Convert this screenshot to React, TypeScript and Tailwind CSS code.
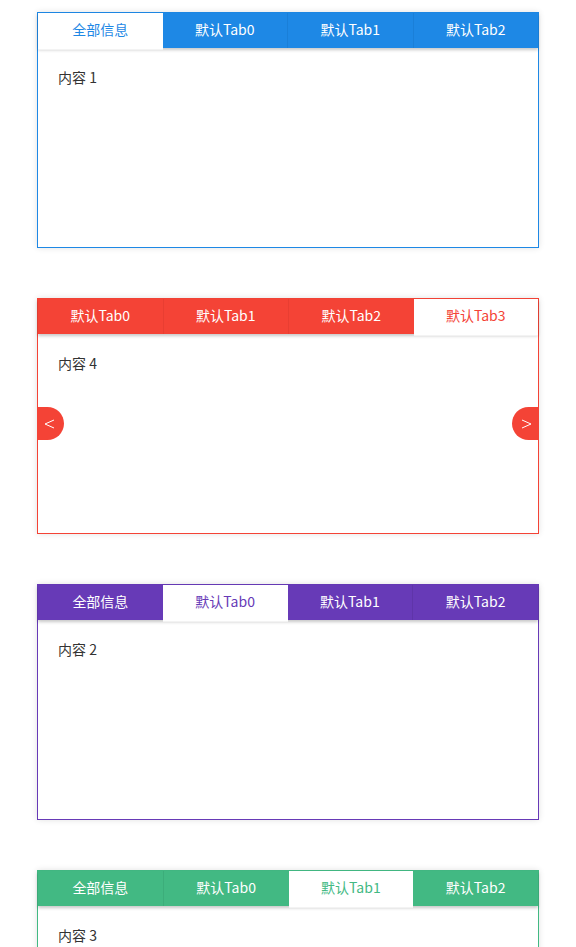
import React from 'react'

type Theme = {
  border: string
  bar: string
  text: string
  divider: string
}

const themes: Record<string, Theme> = {
  blue: {
    border: 'border-[#1e88e5]',
    bar: 'bg-[#1e88e5]',
    text: 'text-[#1e88e5]',
    divider: 'border-[#1a7fd8]',
  },
  red: {
    border: 'border-[#f44336]',
    bar: 'bg-[#f44336]',
    text: 'text-[#f44336]',
    divider: 'border-[#e83e32]',
  },
  purple: {
    border: 'border-[#673ab7]',
    bar: 'bg-[#673ab7]',
    text: 'text-[#673ab7]',
    divider: 'border-[#5f35a9]',
  },
  green: {
    border: 'border-[#42b983]',
    bar: 'bg-[#42b983]',
    text: 'text-[#42b983]',
    divider: 'border-[#3cad7a]',
  },
}

const font = 'font-["Microsoft_YaHei","Noto_Sans_CJK_SC",sans-serif]'

const Chevron = ({ dir }: { dir: 'left' | 'right' }) => (
  <svg width="11" height="10" viewBox="0 0 11 10" fill="none">
    <polyline
      points={dir === 'left' ? '10,1 1,5 10,9' : '1,1 10,5 1,9'}
      stroke="white"
      strokeWidth="1"
      strokeLinejoin="miter"
    />
  </svg>
)

function TabBox({
  theme,
  tabs,
  active,
  content,
  arrows,
}: {
  theme: Theme
  tabs: string[]
  active: number
  content: string
  arrows?: boolean
}) {
  return (
    <div
      className={`relative shrink-0 w-[502px] h-[236px] border bg-white ${theme.border} shadow-[0_0_6px_rgba(0,0,0,0.12)]`}
    >
      <div className={`relative flex h-[35px] ${theme.bar} shadow-[0_2px_3px_rgba(0,0,0,0.22)]`}>
        {tabs.map((t, i) => {
          const isActive = i === active
          const showDivider = i > 0 && !isActive && i - 1 !== active
          return (
            <div
              key={t}
              className={`flex-1 flex items-start justify-center pt-[6px] text-[14px] leading-[20px] ${
                isActive
                  ? `relative z-10 bg-white h-[37px] border-b border-[#f3f3f3] ${theme.text}`
                  : 'text-white'
              } ${showDivider ? `border-l ${theme.divider}` : ''}`}
            >
              {t}
            </div>
          )
        })}
      </div>
      <div className="px-5 pt-[19px] text-[14px] leading-[20px] text-[#333]">{content}</div>
      {arrows && (
        <>
          <div
            className={`absolute left-[-1px] top-[108px] w-[27px] h-[33px] rounded-r-full ${theme.bar} flex items-center justify-center pr-[2px]`}
          >
            <Chevron dir="left" />
          </div>
          <div
            className={`absolute right-[-1px] top-[108px] w-[27px] h-[33px] rounded-l-full ${theme.bar} flex items-center justify-center pl-[2px]`}
          >
            <Chevron dir="right" />
          </div>
        </>
      )}
    </div>
  )
}

export default function App() {
  return (
    <div className={`h-[947px] overflow-hidden bg-white pl-[37px] pt-[12px] flex flex-col gap-[50px] ${font}`}>
      <TabBox
        theme={themes.blue}
        tabs={['全部信息', '默认Tab0', '默认Tab1', '默认Tab2']}
        active={0}
        content="内容 1"
      />
      <TabBox
        theme={themes.red}
        tabs={['默认Tab0', '默认Tab1', '默认Tab2', '默认Tab3']}
        active={3}
        content="内容 4"
        arrows
      />
      <TabBox
        theme={themes.purple}
        tabs={['全部信息', '默认Tab0', '默认Tab1', '默认Tab2']}
        active={1}
        content="内容 2"
      />
      <TabBox
        theme={themes.green}
        tabs={['全部信息', '默认Tab0', '默认Tab1', '默认Tab2']}
        active={2}
        content="内容 3"
      />
    </div>
  )
}
